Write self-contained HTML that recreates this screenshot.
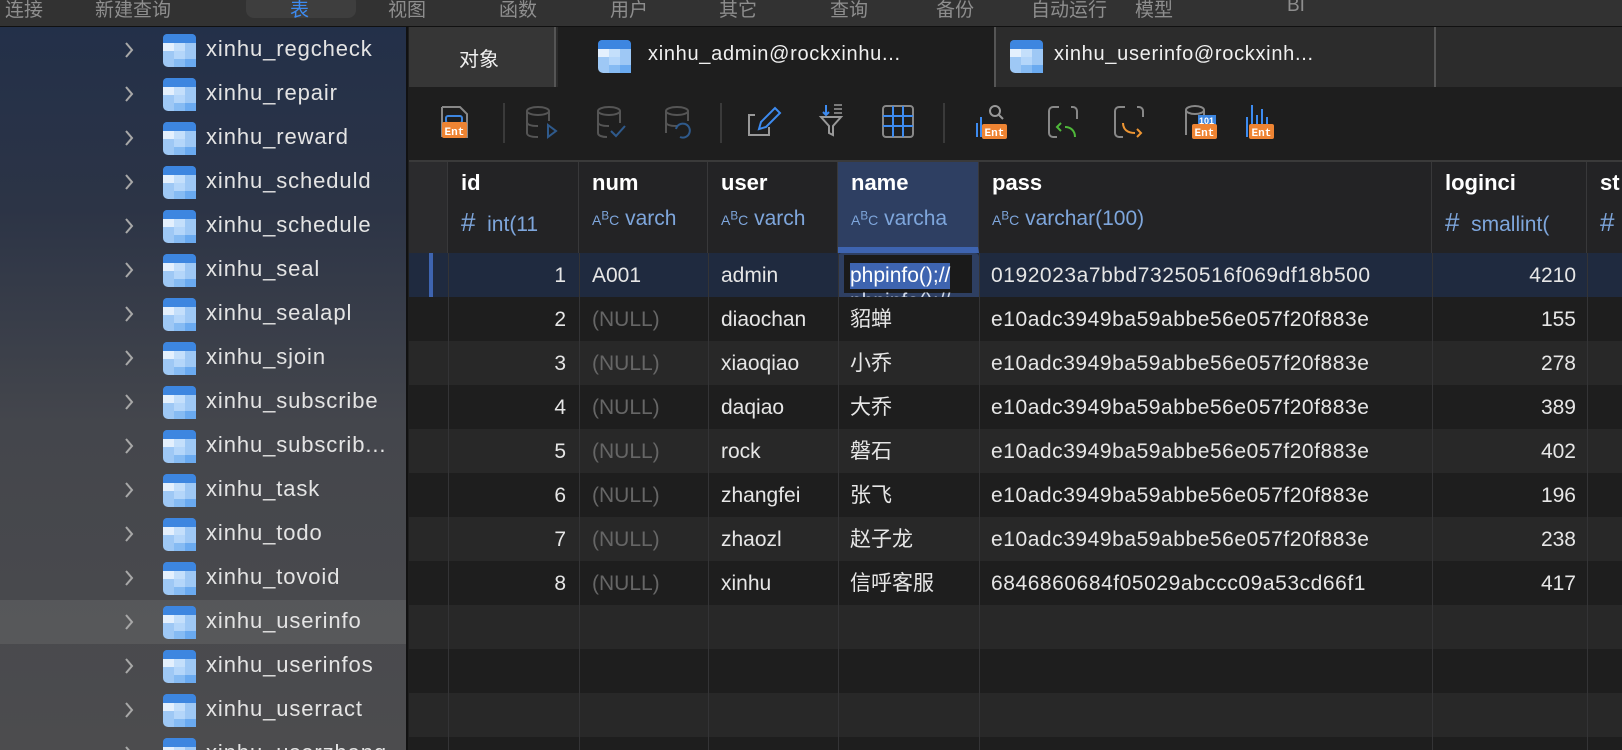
<!DOCTYPE html>
<html><head><meta charset="utf-8"><style>
*{margin:0;padding:0;box-sizing:border-box}
html,body{width:1622px;height:750px;overflow:hidden}
body{background:#1e1e1e;font-family:"Liberation Sans","Noto Sans CJK SC",sans-serif;position:relative;color:#e6e6e6}
.abs{position:absolute}
#menu{position:absolute;z-index:5;left:0;top:0;width:1622px;height:27px;background:#323232;border-bottom:1px solid #111;overflow:hidden}
.mi{position:absolute;top:-5px;font-size:19px;color:#8e8e8e;white-space:nowrap}
#side{position:absolute;left:0;top:27px;width:408px;height:723px;background:linear-gradient(#233049 0%,#2c3446 25%,#44464c 55%,#4c4c4e 100%);overflow:hidden;border-right:2px solid #111}
.srow{position:absolute;left:0;width:406px;height:44px}
.chev{position:absolute;left:124px;top:14px;width:10px;height:16px}
.ic{position:absolute;left:163px;top:6px;width:33px;height:33px}
.st{position:absolute;left:206px;top:8px;font-size:22px;letter-spacing:.9px;color:#e4e4e4;white-space:nowrap}
#tabs{position:absolute;left:409px;top:27px;width:1213px;height:60px;background:#2c2c2c}
.tab{position:absolute;top:0;height:60px;font-size:20px;color:#f0f0f0}
#tb{position:absolute;left:409px;top:87px;width:1213px;height:75px;background:#1e1e1e;border-bottom:2px solid #3a3a3a}
#hdr{position:absolute;left:409px;top:162px;width:1213px;height:91px;background:#232325}
.col{position:absolute;top:0;height:91px;border-right:1px solid #38383a}
.n{position:absolute;left:13px;top:8px;font-size:22px;font-weight:bold;color:#fff}
.ty{position:absolute;left:13px;top:45px;font-size:21px;color:#7ea6dc;white-space:nowrap}
.abc{font-size:14px}
.row{position:absolute;left:409px;width:1213px;height:44px;font-size:21px;overflow:hidden}
.c{position:absolute;top:10px;line-height:26px;height:26px;white-space:nowrap}
.r1{right:1056px}.r2{left:183px}.r3{left:312px}.r4{left:441px}.r5{left:582px;letter-spacing:.55px}.r6{right:46px}
.vl{position:absolute;top:253px;width:1px;height:497px;background:#343436}
.null{color:#666}
.e{background:#1e1e1e}.o{background:#282828}
</style></head><body>
<div id="menu">
<span class="mi" style="left:5px">连接</span><span class="mi" style="left:95px">新建查询</span>
<div class="abs" style="left:246px;top:-6px;width:110px;height:24px;border-radius:8px;background:#3e3e3e"></div>
<span class="mi" style="left:290px;color:#3d8bf0">表</span><span class="mi" style="left:388px">视图</span><span class="mi" style="left:499px">函数</span><span class="mi" style="left:610px">用户</span><span class="mi" style="left:719px">其它</span><span class="mi" style="left:830px">查询</span><span class="mi" style="left:936px">备份</span><span class="mi" style="left:1031px">自动运行</span><span class="mi" style="left:1135px">模型</span><span class="mi" style="left:1287px">BI</span>
</div>

<svg width="0" height="0" style="position:absolute"><defs><symbol id="tbl" viewBox="0 0 33 33"><rect width="33" height="33" rx="5" fill="#9ec8f5"/><rect width="33" height="9" rx="4" fill="#3d86e0"/><rect y="5" width="33" height="4" fill="#3d86e0"/><rect x="0" y="9" width="11" height="8" fill="#e4f0fd"/><rect x="11" y="9" width="11" height="8" fill="#c4dffb"/><rect x="11" y="17" width="11" height="8" fill="#b4d6fa"/><rect x="11" y="25" width="11" height="8" fill="#86bbf3"/><rect x="22" y="25" width="11" height="8" fill="#6aaaf0"/></symbol>
<symbol id="chv" viewBox="0 0 10 16"><path d="M2 1l6 7-6 7" fill="none" stroke="#a8a8a8" stroke-width="2"/></symbol></defs></svg>

<div id="side">
<div class="srow" style="top:573px;background:rgba(255,255,255,.08)"></div>
<div class="srow" style="top:1px"><svg class="chev"><use href="#chv"/></svg><svg class="ic"><use href="#tbl"/></svg><span class="st">xinhu_regcheck</span></div>
<div class="srow" style="top:45px"><svg class="chev"><use href="#chv"/></svg><svg class="ic"><use href="#tbl"/></svg><span class="st">xinhu_repair</span></div>
<div class="srow" style="top:89px"><svg class="chev"><use href="#chv"/></svg><svg class="ic"><use href="#tbl"/></svg><span class="st">xinhu_reward</span></div>
<div class="srow" style="top:133px"><svg class="chev"><use href="#chv"/></svg><svg class="ic"><use href="#tbl"/></svg><span class="st">xinhu_scheduld</span></div>
<div class="srow" style="top:177px"><svg class="chev"><use href="#chv"/></svg><svg class="ic"><use href="#tbl"/></svg><span class="st">xinhu_schedule</span></div>
<div class="srow" style="top:221px"><svg class="chev"><use href="#chv"/></svg><svg class="ic"><use href="#tbl"/></svg><span class="st">xinhu_seal</span></div>
<div class="srow" style="top:265px"><svg class="chev"><use href="#chv"/></svg><svg class="ic"><use href="#tbl"/></svg><span class="st">xinhu_sealapl</span></div>
<div class="srow" style="top:309px"><svg class="chev"><use href="#chv"/></svg><svg class="ic"><use href="#tbl"/></svg><span class="st">xinhu_sjoin</span></div>
<div class="srow" style="top:353px"><svg class="chev"><use href="#chv"/></svg><svg class="ic"><use href="#tbl"/></svg><span class="st">xinhu_subscribe</span></div>
<div class="srow" style="top:397px"><svg class="chev"><use href="#chv"/></svg><svg class="ic"><use href="#tbl"/></svg><span class="st">xinhu_subscrib...</span></div>
<div class="srow" style="top:441px"><svg class="chev"><use href="#chv"/></svg><svg class="ic"><use href="#tbl"/></svg><span class="st">xinhu_task</span></div>
<div class="srow" style="top:485px"><svg class="chev"><use href="#chv"/></svg><svg class="ic"><use href="#tbl"/></svg><span class="st">xinhu_todo</span></div>
<div class="srow" style="top:529px"><svg class="chev"><use href="#chv"/></svg><svg class="ic"><use href="#tbl"/></svg><span class="st">xinhu_tovoid</span></div>
<div class="srow" style="top:573px"><svg class="chev"><use href="#chv"/></svg><svg class="ic"><use href="#tbl"/></svg><span class="st">xinhu_userinfo</span></div>
<div class="srow" style="top:617px"><svg class="chev"><use href="#chv"/></svg><svg class="ic"><use href="#tbl"/></svg><span class="st">xinhu_userinfos</span></div>
<div class="srow" style="top:661px"><svg class="chev"><use href="#chv"/></svg><svg class="ic"><use href="#tbl"/></svg><span class="st">xinhu_userract</span></div>
<div class="srow" style="top:705px"><svg class="chev"><use href="#chv"/></svg><svg class="ic"><use href="#tbl"/></svg><span class="st">xinhu_userzhang</span></div>
</div>

<div id="tabs">
<div class="tab" style="left:0;width:147px;background:#363636;border-right:2px solid #555"><span class="abs" style="left:50px;top:16px">对象</span></div>
<div class="tab" style="left:149px;width:438px;background:#1e1e1e;border-right:2px solid #555">
<svg class="abs" style="left:40px;top:13px" width="33" height="33"><use href="#tbl"/></svg>
<span class="abs" style="left:90px;top:16px;letter-spacing:.7px;white-space:nowrap">xinhu_admin@rockxinhu...</span></div>
<div class="tab" style="left:589px;width:438px;background:#2c2c2c;border-right:2px solid #555">
<svg class="abs" style="left:12px;top:13px" width="33" height="33"><use href="#tbl"/></svg>
<span class="abs" style="left:56px;top:16px;letter-spacing:.7px;white-space:nowrap">xinhu_userinfo@rockxinh...</span></div>
</div>

<div id="tb">
<svg width="1213" height="73" viewBox="0 0 1213 73" fill="none" stroke-width="2">
<path d="M33 20h18l7 7v24M33 20v30" stroke="#888"/><rect x="37" y="29" width="16" height="7" rx="2" stroke="#3d86e0"/><rect x="33" y="35" width="25" height="16" rx="2" fill="#ee8433" stroke="none"/><text x="35.5" y="48" font-size="11" fill="#fff" stroke="none" font-family="Liberation Mono" font-weight="bold">Ent</text>
<line x1="95" y1="16" x2="95" y2="56" stroke="#3a3a3a"/>
<g stroke="#555"><ellipse cx="129" cy="24" rx="11" ry="4"/><path d="M118 24v22c0 3 5 4 11 4M140 24v10M118 35c0 3 5 4 11 4"/><path d="M139 38l8 6-8 6z" stroke="#2f5a8c"/></g>
<g stroke="#555"><ellipse cx="200" cy="24" rx="11" ry="4"/><path d="M189 24v22c0 3 5 4 9 4M211 24v12M189 35c0 3 5 4 11 4"/><path d="M202 44l5 5 9-10" stroke="#2f5a8c"/></g>
<g stroke="#555"><ellipse cx="268" cy="24" rx="11" ry="4"/><path d="M257 24v22M279 24v10M257 35c0 3 5 4 11 4"/><path d="M271 50a7 7 0 1 0-4-8" stroke="#2f5a8c"/></g>
<line x1="312" y1="16" x2="312" y2="56" stroke="#3a3a3a"/>
<path d="M346 28h-6v20h20v-8" stroke="#999"/><path d="M350 42l2-7 14-14 5 5-14 14z" stroke="#3d8bf0"/>
<path d="M412 30h20l-8 9v9l-4-2v-7z" stroke="#999"/><path d="M417 18v10M414 25l3 3 3-3" stroke="#3d8bf0"/><path d="M425 18h8M425 22h8M425 26h8" stroke="#999" stroke-width="1.5"/>
<rect x="474" y="19" width="30" height="31" rx="3" stroke="#888"/><path d="M484 19v31M494 19v31M474 29h30M474 39h30" stroke="#3d8bf0"/>
<line x1="535" y1="16" x2="535" y2="56" stroke="#3a3a3a"/>
<path d="M568 50V36M572 50V30M576 50V40" stroke="#3d8bf0"/><circle cx="586" cy="24" r="5" stroke="#999"/><path d="M590 28l4 4" stroke="#999"/><rect x="573" y="37" width="25" height="15" rx="2" fill="#ee8433" stroke="none"/><text x="575.5" y="49" font-size="11" fill="#fff" stroke="none" font-family="Liberation Mono" font-weight="bold">Ent</text>
<path d="M650 20h-6a4 4 0 0 0-4 4v22a4 4 0 0 0 4 4h4M662 20h2a4 4 0 0 1 4 4v8" stroke="#888"/><path d="M666 50c0-6-4-10-10-10M652 36l-4 4 4 4" stroke="#4fb83a"/>
<path d="M716 20h-6a4 4 0 0 0-4 4v22a4 4 0 0 0 4 4h4M728 20h2a4 4 0 0 1 4 4v6" stroke="#888"/><path d="M714 36c0 6 4 10 12 10M728 42l4 4-4 4" stroke="#ee9633"/>
<ellipse cx="786" cy="23" rx="9" ry="4" stroke="#888"/><path d="M777 23v25M795 23v8" stroke="#888"/><rect x="789" y="28" width="18" height="10" fill="#3d86e0" stroke="none"/><text x="790" y="37" font-size="9" fill="#fff" stroke="none" font-weight="bold">101</text><rect x="783" y="37" width="25" height="15" rx="2" fill="#ee8433" stroke="none"/><text x="785.5" y="49" font-size="11" fill="#fff" stroke="none" font-family="Liberation Mono" font-weight="bold">Ent</text>
<path d="M838 50V30M843 50V18M848 50V28M853 50V22M858 50V30" stroke="#3d8bf0"/><rect x="840" y="37" width="25" height="15" rx="2" fill="#ee8433" stroke="none"/><text x="842.5" y="49" font-size="11" fill="#fff" stroke="none" font-family="Liberation Mono" font-weight="bold">Ent</text>
</svg>
</div>

<div id="hdr">
<div class="col" style="left:0;width:39px;background:#2b2b2d"></div>
<div class="col" style="left:39px;width:131px"><div class="n">id</div><div class="ty"><span style="font-size:26px">#</span>&nbsp; int(11</div></div>
<div class="col" style="left:170px;width:129px"><div class="n">num</div><div class="ty"><span class="abc">A<sup>B</sup>C</span> varch</div></div>
<div class="col" style="left:299px;width:130px"><div class="n">user</div><div class="ty"><span class="abc">A<sup>B</sup>C</span> varch</div></div>
<div class="col" style="left:429px;width:141px;background:#2e3f62;border-bottom:6px solid #3e64b0"><div class="n">name</div><div class="ty"><span class="abc">A<sup>B</sup>C</span> varcha</div></div>
<div class="col" style="left:570px;width:453px"><div class="n">pass</div><div class="ty"><span class="abc">A<sup>B</sup>C</span> varchar(100)</div></div>
<div class="col" style="left:1023px;width:155px"><div class="n">loginci</div><div class="ty"><span style="font-size:26px">#</span>&nbsp; smallint(</div></div>
<div class="col" style="left:1178px;width:60px"><div class="n">st</div><div class="ty"><span style="font-size:26px">#</span></div></div>
</div>

<div class="row" style="top:253px;background:#1f2a3f">
<div class="abs" style="left:20px;top:0;width:4px;height:44px;background:#3e64b0"></div>
<span class="c r1">1</span><span class="c r2">A001</span><span class="c r3">admin</span>
<div class="abs" style="left:429px;top:0;width:141px;height:50px;background:#2e3f62;border-radius:4px"></div>
<div class="abs" style="left:435px;top:2px;width:128px;height:38px;background:#1a1a1a"></div>
<span class="c r4" style="background:#3e64b0;color:#fff">phpinfo();//</span>
<span class="c r4" style="top:36px;color:#cfd8e8">phpinfo();//</span>
<span class="c r5">0192023a7bbd73250516f069df18b500</span><span class="c r6">4210</span></div>
<div class="row e" style="top:297px"><span class="c r1">2</span><span class="c r2 null">(NULL)</span><span class="c r3">diaochan</span><span class="c r4">貂蝉</span><span class="c r5">e10adc3949ba59abbe56e057f20f883e</span><span class="c r6">155</span></div>
<div class="row o" style="top:341px"><span class="c r1">3</span><span class="c r2 null">(NULL)</span><span class="c r3">xiaoqiao</span><span class="c r4">小乔</span><span class="c r5">e10adc3949ba59abbe56e057f20f883e</span><span class="c r6">278</span></div>
<div class="row e" style="top:385px"><span class="c r1">4</span><span class="c r2 null">(NULL)</span><span class="c r3">daqiao</span><span class="c r4">大乔</span><span class="c r5">e10adc3949ba59abbe56e057f20f883e</span><span class="c r6">389</span></div>
<div class="row o" style="top:429px"><span class="c r1">5</span><span class="c r2 null">(NULL)</span><span class="c r3">rock</span><span class="c r4">磐石</span><span class="c r5">e10adc3949ba59abbe56e057f20f883e</span><span class="c r6">402</span></div>
<div class="row e" style="top:473px"><span class="c r1">6</span><span class="c r2 null">(NULL)</span><span class="c r3">zhangfei</span><span class="c r4">张飞</span><span class="c r5">e10adc3949ba59abbe56e057f20f883e</span><span class="c r6">196</span></div>
<div class="row o" style="top:517px"><span class="c r1">7</span><span class="c r2 null">(NULL)</span><span class="c r3">zhaozl</span><span class="c r4">赵子龙</span><span class="c r5">e10adc3949ba59abbe56e057f20f883e</span><span class="c r6">238</span></div>
<div class="row e" style="top:561px"><span class="c r1">8</span><span class="c r2 null">(NULL)</span><span class="c r3">xinhu</span><span class="c r4">信呼客服</span><span class="c r5">6846860684f05029abccc09a53cd66f1</span><span class="c r6">417</span></div>
<div class="row o" style="top:605px"></div>
<div class="row e" style="top:649px"></div>
<div class="row o" style="top:693px"></div>
<div class="row e" style="top:737px"></div>

<div class="vl" style="left:448px"></div><div class="vl" style="left:579px"></div><div class="vl" style="left:708px"></div><div class="vl" style="left:838px"></div><div class="vl" style="left:979px"></div><div class="vl" style="left:1432px"></div><div class="vl" style="left:1587px"></div>
</body></html>
